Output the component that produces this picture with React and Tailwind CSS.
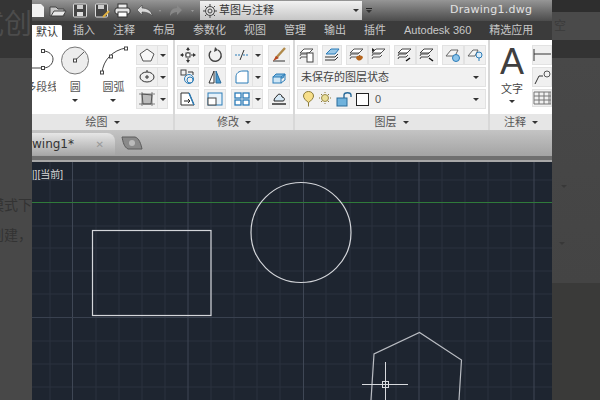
const cjk = { fontFamily: '"Liberation Sans", "Noto Sans CJK SC", sans-serif' };

function Tri({ className = "" }) {
  return <span className={`block w-0 h-0 border-x-[3px] border-x-transparent border-t-[3px] border-t-[#333] ${className}`} />;
}

function Btn({ children, w = "w-[22px]" }) {
  return (
    <div className={`${w} h-[20px] flex items-center justify-center bg-[#f0f0f0] border border-[#e2e2e2]`}>
      <svg width="18" height="16" viewBox="0 0 18 16" fill="none">{children}</svg>
    </div>
  );
}

function SplitBtn({ children }) {
  return (
    <div className="flex w-[32px] h-[20px] bg-[#f0f0f0] border border-[#e2e2e2]">
      <div className="w-[21px] flex items-center justify-center border-r border-[#e2e2e2]">
        <svg width="18" height="16" viewBox="0 0 18 16" fill="none">{children}</svg>
      </div>
      <div className="flex-1 flex items-center justify-center"><Tri /></div>
    </div>
  );
}

function PanelTitle({ label }) {
  return (
    <div className="h-[16px] mt-auto flex items-center justify-center gap-[6px] bg-[#e6e6e6] text-[11px] text-[#555]">
      {label}
      <Tri />
    </div>
  );
}

function DrawPanel() {
  return (
    <div className="w-[143px] flex flex-col border-r-2 border-[#d8d8d8] overflow-hidden">
      <div className="flex justify-end gap-[2px] pr-[5px] pt-[6px]">
        <div className="flex flex-col items-center w-[24px] overflow-hidden">
          <svg width="24" height="29" viewBox="0 0 24 29" fill="none" stroke="#444">
            <path d="M11 5C17 5 21 9 21 13C21 18 17 22 11 22H0" />
            <rect x="9.5" y="3.5" width="3" height="3" fill="#fff" />
            <rect x="9.5" y="20.5" width="3" height="3" fill="#fff" />
          </svg>
          <span className="text-[11px] text-[#555] whitespace-nowrap mt-[4px] mr-[4px]">多段线</span>
        </div>
        <div className="flex flex-col items-center w-[36px]">
          <svg width="30" height="29" viewBox="0 0 30 29" fill="none">
            <circle cx="15" cy="14.5" r="13.5" fill="#ededed" stroke="#777" />
            <path d="M15 14.5L24 6" stroke="#555" />
            <rect x="13.5" y="13" width="3" height="3" fill="#fff" stroke="#444" />
          </svg>
          <span className="text-[11px] text-[#555] mt-[4px]">圆</span>
          <Tri className="mt-[3px]" />
        </div>
        <div className="flex flex-col items-center w-[38px]">
          <svg width="30" height="29" viewBox="0 0 30 29" fill="none" stroke="#444" className="ml-[2px]">
            <path d="M3 27C4 14 14 4 27 2" />
            <rect x="1.5" y="25" width="3" height="3" fill="#fff" />
            <rect x="10.5" y="9" width="3" height="3" fill="#fff" />
            <rect x="25.5" y="1" width="3" height="3" fill="#fff" />
          </svg>
          <span className="text-[11px] text-[#555] mt-[4px]">圆弧</span>
          <Tri className="mt-[3px]" />
        </div>
        <div className="flex flex-col gap-[2px] ml-[2px] -mt-[1px]">
          <SplitBtn><path d="M9 2L16 7L13 14H5L2 7Z" stroke="#555" fill="#f8f8f8" /></SplitBtn>
          <SplitBtn>
            <ellipse cx="9" cy="8" rx="7" ry="5" stroke="#333" />
            <path d="M9 3V1M7 8H11M9 6V10" stroke="#333" />
          </SplitBtn>
          <SplitBtn>
            <path d="M4 3L14 4L13 13L5 13Z" fill="#bbb" stroke="#555" />
            <path d="M1 3H17M1 13H17M4 1V15M14 1V15" stroke="#555" strokeWidth="0.7" />
          </SplitBtn>
        </div>
      </div>
      <PanelTitle label="绘图" />
    </div>
  );
}

function ModifyPanel() {
  return (
    <div className="w-[120px] flex flex-col border-r-2 border-[#d8d8d8]">
      <div className="grid grid-cols-[22px_22px_32px_22px] gap-x-[5px] gap-y-[2px] pl-[2px] pt-[5px]">
        <Btn>
          <path d="M9 2V14M3 8H15" stroke="#333" strokeDasharray="2 1" />
          <rect x="7" y="6" width="4" height="4" fill="#fff" stroke="#333" />
          <path d="M9 0L11 3H7ZM9 16L7 13H11ZM1 8L4 6V10ZM17 8L14 10V6Z" fill="#333" />
        </Btn>
        <Btn>
          <path d="M5 4A6 6 0 1 0 12 3" stroke="#444" strokeWidth="1.4" />
          <path d="M9 0L12 3L8 5Z" fill="#444" />
        </Btn>
        <SplitBtn>
          <path d="M2 8H7M10 8H16" stroke="#2b7cb8" strokeDasharray="2 1" />
          <path d="M7 13L11 3" stroke="#333" />
        </SplitBtn>
        <Btn>
          <path d="M3 14H15" stroke="#333" />
          <path d="M6 11L15 1" stroke="#b08a4a" strokeWidth="2.4" />
          <path d="M3 14L6 9L9 11Z" fill="#b5451f" />
        </Btn>
        <Btn>
          <rect x="2" y="1" width="5" height="5" stroke="#444" />
          <circle cx="10" cy="10" r="4.5" stroke="#2b7cb8" />
          <circle cx="11" cy="11" r="3" stroke="#2b7cb8" />
          <path d="M9 3H14V6" stroke="#333" />
        </Btn>
        <Btn>
          <path d="M8 2V14L3 14Z" fill="#fff" stroke="#333" />
          <path d="M10 2V14L15 14Z" fill="#4a9ad0" stroke="#2b6c9b" />
        </Btn>
        <SplitBtn>
          <path d="M3 14V8C3 4 6 2 10 2H15V14Z" fill="#fff" stroke="#2b7cb8" />
        </SplitBtn>
        <Btn>
          <path d="M3 8L6 5H15L13 9H5Z" fill="#7fb8de" stroke="#2b7cb8" />
          <rect x="3" y="8" width="8" height="6" fill="#cfe6f5" stroke="#2b7cb8" />
          <path d="M11 8L15 5V11L11 14" stroke="#2b7cb8" />
        </Btn>
        <Btn>
          <path d="M2 2H10L15 14H2Z" fill="#fff" stroke="#333" />
          <path d="M10 2L15 14" stroke="#2b7cb8" strokeWidth="1.4" />
          <path d="M5 10H11M9 8L11 10L9 12" stroke="#222" />
        </Btn>
        <Btn>
          <rect x="2" y="2" width="14" height="12" fill="#e6f1f9" stroke="#2b7cb8" />
          <rect x="2" y="7" width="8" height="7" fill="#fff" stroke="#444" />
        </Btn>
        <SplitBtn>
          <rect x="2" y="2" width="6" height="5" fill="#fff" stroke="#2b7cb8" strokeWidth="1.3" />
          <rect x="10" y="2" width="6" height="5" fill="#fff" stroke="#2b7cb8" strokeWidth="1.3" />
          <rect x="2" y="9" width="6" height="5" fill="#fff" stroke="#2b7cb8" strokeWidth="1.3" />
          <rect x="10" y="9" width="6" height="5" fill="#fff" stroke="#2b7cb8" strokeWidth="1.3" />
        </SplitBtn>
        <Btn>
          <path d="M2 13H16" stroke="#222" strokeWidth="1.4" />
          <path d="M4 10C4 7 6 6 7 5C8 2 12 3 12 6C15 6 15 10 13 10Z" fill="#d6e9f6" stroke="#222" />
        </Btn>
      </div>
      <PanelTitle label="修改" />
    </div>
  );
}

function Layers({ color = "#555", children }) {
  return (
    <>
      <path d="M2 6L6 2H15L11 6Z" fill="#fff" stroke={color} />
      <path d="M2 9L3 7H10L12 5M2 12L3 10H10L12 8" stroke={color} />
      {children}
    </>
  );
}

function LayerPanel() {
  return (
    <div className="w-[195px] flex flex-col border-r-2 border-[#d8d8d8]">
      <div className="flex flex-col gap-[2px] px-[2px] pt-[5px]">
        <div className="flex gap-[4px]">
          <Btn><Layers /><rect x="9" y="6" width="6" height="9" fill="#fff" stroke="#444" /></Btn>
          <Btn><path d="M3 7L8 2H16L12 7Z" fill="#9cc8e6" stroke="#2b7cb8" /><path d="M2 10L12 10L15 7M2 13H12L15 10" stroke="#333" /></Btn>
          <div className="flex">
            <Btn><Layers /><path d="M8 11C9 8 13 8 15 10C14 14 10 15 8 11Z" fill="#b5651d" /></Btn>
            <Btn><Layers /><path d="M2 1L5 3L2 5Z" fill="#222" /></Btn>
          </div>
          <div className="flex">
            <Btn><Layers color="#444" /><path d="M10 14L14 11" stroke="#111" strokeWidth="1.5" /></Btn>
            <Btn><Layers color="#444" /><path d="M11 11L15 14" stroke="#111" strokeWidth="1.5" /></Btn>
          </div>
          <div className="flex">
            <Btn><path d="M2 9L7 3H14L11 9Z" fill="#f4f4f4" stroke="#666" /><circle cx="12" cy="11" r="3.5" fill="#8cc4ea" stroke="#2b7cb8" /></Btn>
            <Btn><path d="M2 9L7 3H12L9 9Z" fill="#f4f4f4" stroke="#666" /><circle cx="13" cy="8" r="3" fill="#dcecf8" stroke="#2b7cb8" /><path d="M13 11V14" stroke="#2b7cb8" /></Btn>
          </div>
        </div>
        <div className="h-[20px] flex items-center justify-between pl-[3px] pr-[6px] bg-[#f1f1f1] border border-[#e2e2e2] text-[11px] text-[#444]">
          未保存的图层状态
          <Tri />
        </div>
        <div className="h-[20px] flex items-center justify-between pl-[4px] pr-[6px] bg-[#f1f1f1] border border-[#e2e2e2] text-[11px] text-[#555]">
          <div className="flex items-center">
            <svg width="54" height="16" viewBox="0 0 54 16" fill="none">
              <path d="M6.5 15.5V11.5C3.5 9.5 1.5 7 1.5 5C1.5 2 4 0.5 6.5 0.5C9 0.5 11.5 2 11.5 5C11.5 7 9.5 9.5 6.5 11.5" fill="#f7df8a" stroke="#8a7a3a" />
              <circle cx="23" cy="7" r="3.5" fill="#eadf9a" stroke="#9a8a4a" />
              <path d="M23 1V2M23 12V13M17 7H18M28 7H29M19 3L20 4M26 10L27 11M27 3L26 4M20 10L19 11" stroke="#8a7a3a" />
              <rect x="35" y="7" width="10" height="8" fill="#6fb2dc" stroke="#2b6c9b" />
              <path d="M42 7V4C42 1 49 1 49 4V6" stroke="#2b6c9b" strokeWidth="1.4" />
            </svg>
            <span className="w-[13px] h-[13px] bg-white border border-[#222]" />
            <span className="ml-[6px]">0</span>
          </div>
          <Tri />
        </div>
      </div>
      <PanelTitle label="图层" />
    </div>
  );
}

function AnnotatePanel() {
  return (
    <div className="flex-1 flex flex-col overflow-hidden">
      <div className="flex pt-[4px] pl-[2px]">
        <div className="w-[44px] flex flex-col items-center">
          <span className="text-[36px] leading-[36px] text-[#3f3f3f]" style={{ fontFamily: '"Liberation Sans", sans-serif' }}>A</span>
          <span className="text-[11px] leading-[14px] text-[#444] mt-[2px]">文字</span>
          <Tri className="mt-[4px]" />
        </div>
        <div className="flex flex-col gap-[2px] pt-[1px]">
          <div className="w-[20px] h-[20px] bg-[#f0f0f0] border border-[#e2e2e2] flex items-center overflow-hidden">
            <svg width="18" height="16" viewBox="0 0 18 16" fill="none"><path d="M1 2V14M1 7H18" stroke="#333" /></svg>
          </div>
          <div className="w-[20px] h-[20px] bg-[#f0f0f0] border border-[#e2e2e2] flex items-center overflow-hidden">
            <svg width="18" height="16" viewBox="0 0 18 16" fill="none"><path d="M2 15L6 7H10" stroke="#333" /><circle cx="14" cy="5" r="3" stroke="#555" /></svg>
          </div>
          <div className="w-[20px] h-[18px] bg-[#f0f0f0] border border-[#e2e2e2] flex items-center overflow-hidden">
            <svg width="18" height="14" viewBox="0 0 18 14" fill="none"><path d="M1 1H18V13H1ZM1 5H18M1 9H18M6 1V13M11 1V13M16 1V13" stroke="#777" /></svg>
          </div>
        </div>
      </div>
      <PanelTitle label="注释" />
    </div>
  );
}

function QuickBar() {
  return (
    <svg width="168" height="20" viewBox="0 0 168 20" fill="none" className="shrink-0">
      <path d="M0 3H9L12 6V16H0Z" fill="#f2f2f2" />
      <g transform="translate(-2 0)">
        <path d="M20 6H26L28 8H34V15H20Z" fill="#c8c8c8" stroke="#444" />
        <path d="M21 15L24 10H36L33 15Z" fill="#e8e8e8" stroke="#444" />
      </g>
      <rect x="41.5" y="3" width="13" height="13" rx="1" fill="#444" stroke="#ddd" />
      <rect x="45" y="4" width="6" height="4" fill="#ccc" />
      <rect x="45" y="11" width="6" height="4" fill="#ddd" />
      <rect x="63.5" y="3" width="12" height="13" rx="1" fill="#444" stroke="#ddd" />
      <rect x="66" y="4" width="6" height="4" fill="#ccc" />
      <path d="M71 16L77 10" stroke="#e0b040" strokeWidth="2" />
      <g transform="translate(-3 0)">
        <rect x="89" y="3" width="9" height="5" fill="#eee" stroke="#333" />
        <rect x="86" y="7" width="15" height="6" rx="2" fill="#e6e6e6" stroke="#333" />
        <rect x="89" y="11" width="9" height="5" fill="#fff" stroke="#333" />
      </g>
      <path d="M105 9L110 4V7C115 7 120 10 120 15C118 12 114 11 110 11V14Z" fill="#d8d8d8" stroke="#444" strokeWidth="0.6" />
      <path d="M127 9L129 9L128 11Z" fill="#999" />
      <path d="M150 9L145 4V7C140 7 138 10 138 15C140 12 142 11 145 11V14Z" fill="#888" />
      <path d="M159 9L162 9L160.5 11Z" fill="#999" />
    </svg>
  );
}

function Canvas() {
  const vx = [50, 96, 119, 142, 165, 211, 234, 257, 280, 326, 350, 372, 396, 442, 465, 488, 511];
  const mx = [72.5, 188, 303.5, 419, 534];
  const hy = [180, 226, 248, 271, 294, 341, 364, 387];
  return (
    <div className="flex-1 bg-[#1e2530] overflow-hidden relative">
      <svg width="520" height="238" viewBox="32 162 520 238" fill="none" className="block">
        {vx.map((x) => <path key={x} d={`M${x} 162V400`} stroke="#2a323e" />)}
        {hy.map((y) => <path key={y} d={`M32 ${y}H552`} stroke="#2a323e" />)}
        {mx.map((x) => <path key={x} d={`M${x} 162V400`} stroke="#3f4755" />)}
        <path d="M32 317.5H552" stroke="#39414f" />
        <path d="M32 202.5H552" stroke="#2f7a3a" />
        <rect x="92.5" y="230.5" width="118.5" height="85" stroke="#d4d6da" strokeWidth="1.2" />
        <circle cx="301" cy="232.5" r="50" stroke="#d4d6da" strokeWidth="1.2" />
        <path d="M371 400L374 354L419.5 332.5L461.5 360L459 400" stroke="#b9bcc2" strokeWidth="1.2" />
        <path d="M362 384.5H408M385.5 362V400" stroke="#d8dade" />
        <rect x="382.5" y="381.5" width="6" height="6" stroke="#d8dade" />
      </svg>
      <span className="absolute left-0 top-[5px] text-[10px] text-[#d8d8d8]" style={cjk}>|][当前]</span>
    </div>
  );
}

export default function App() {
  const tabs = ["插入", "注释", "布局", "参数化", "视图", "管理", "输出", "插件", "Autodesk 360", "精选应用"];
  return (
    <div className="flex w-[600px] h-[400px] overflow-hidden bg-[#484848]" style={cjk}>
      <div className="w-[32px] shrink-0 flex flex-col overflow-hidden">
        <div className="h-[58px] bg-[#353535] flex items-center justify-end pb-[8px] overflow-hidden">
          <span className="text-[28px] text-[#4c4c4c] whitespace-nowrap">式创</span>
        </div>
        <div className="flex-1 bg-[#484848] pt-[134px] flex flex-col items-end gap-[4px] text-[14px] leading-[26px] text-[#333] overflow-hidden">
          <span className="whitespace-nowrap">模式下</span>
          <span className="whitespace-nowrap">创建，</span>
        </div>
      </div>

      <div className="w-[520px] shrink-0 flex flex-col">
        <div className="h-[21px] flex items-center bg-gradient-to-b from-[#969696] to-[#4c4c4c]">
          <QuickBar />
          <div className="w-[162px] h-[19px] flex items-center gap-[2px] pl-[3px] pr-[3px] bg-gradient-to-b from-[#f2f2f2] to-[#c6c6c6] text-[11px] text-[#333]">
            <svg width="14" height="14" viewBox="0 0 14 14" fill="none" stroke="#444">
              <circle cx="7" cy="7" r="4.5" />
              <circle cx="7" cy="7" r="2" />
              <path d="M7 0V2M7 12V14M0 7H2M12 7H14M2 2L3.5 3.5M10.5 10.5L12 12M12 2L10.5 3.5M3.5 10.5L2 12" />
            </svg>
            <span className="flex-1">草图与注释</span>
            <Tri />
          </div>
          <div className="ml-[4px] flex flex-col items-center gap-[1px]">
            <span className="w-[6px] h-px bg-[#222]" />
            <Tri className="border-t-[#222]" />
          </div>
          <span className="ml-[78px] text-[11px] text-[#e2e2e2] tracking-[0.25px] whitespace-nowrap" style={{ fontFamily: '"DejaVu Sans", sans-serif' }}>Drawing1.dwg</span>
        </div>

        <div className="h-[19px] flex items-end bg-[#3b3b3b] text-[11px] text-[#c8c8c8]">
          <div className="w-[30px] h-[15px] flex items-center justify-center bg-white text-[#333] rounded-tr-[2px]">默认</div>
          <div className="flex items-center h-[19px] pl-[11px] gap-[18px] whitespace-nowrap">
            {tabs.map((t) => <span key={t}>{t}</span>)}
          </div>
        </div>

        <div className="h-[90px] flex bg-white">
          <DrawPanel />
          <ModifyPanel />
          <LayerPanel />
          <AnnotatePanel />
        </div>

        <div className="h-[32px] flex flex-col bg-gradient-to-b from-[#c4c4c4] to-[#9c9c9c]">
          <div className="flex-1 flex items-center">
            <div className="w-[83px] h-[22px] mt-[2px] flex items-center justify-between pr-[11px] bg-gradient-to-b from-[#e6e6e6] to-[#a8a8a8] rounded-tr-[8px] text-[12px] text-[#333]" style={{ fontFamily: '"DejaVu Sans", sans-serif' }}>
              wing1*
              <span className="text-[10px] text-[#999]">✕</span>
            </div>
            <svg width="22" height="16" viewBox="0 0 22 16" className="ml-[6px]">
              <path d="M1 2H14C18 3 20 9 21 14H7C3 12 2 7 1 2Z" fill="#8a8a8a" stroke="#5c5c5c" />
              <circle cx="11" cy="8" r="3" fill="#bbb" />
            </svg>
          </div>
          <div className="h-[4px] bg-[#6f6f6f]" />
          <div className="h-[2px] bg-[#a8a8a8]" />
        </div>

        <Canvas />
      </div>

      <div className="w-[48px] shrink-0 flex flex-col">
        <div className="h-[12px] bg-[#2e2e2e]" />
        <div className="h-[28px] bg-[#4a4a4a] pl-[2px] flex items-center text-[12px] text-[#3a3a3a]">空</div>
        <div className="h-[18px] bg-[#333]" />
        <div className="h-[225px] bg-gradient-to-b from-[#484848] to-[#444] flex flex-col pl-[9px] pt-[127px] gap-[54px]">
          <Tri className="border-t-[#383838]" />
          <Tri className="border-t-[#383838] -ml-[2px]" />
        </div>
        <div className="flex-1 bg-[#3a3a39]" />
      </div>
    </div>
  );
}
